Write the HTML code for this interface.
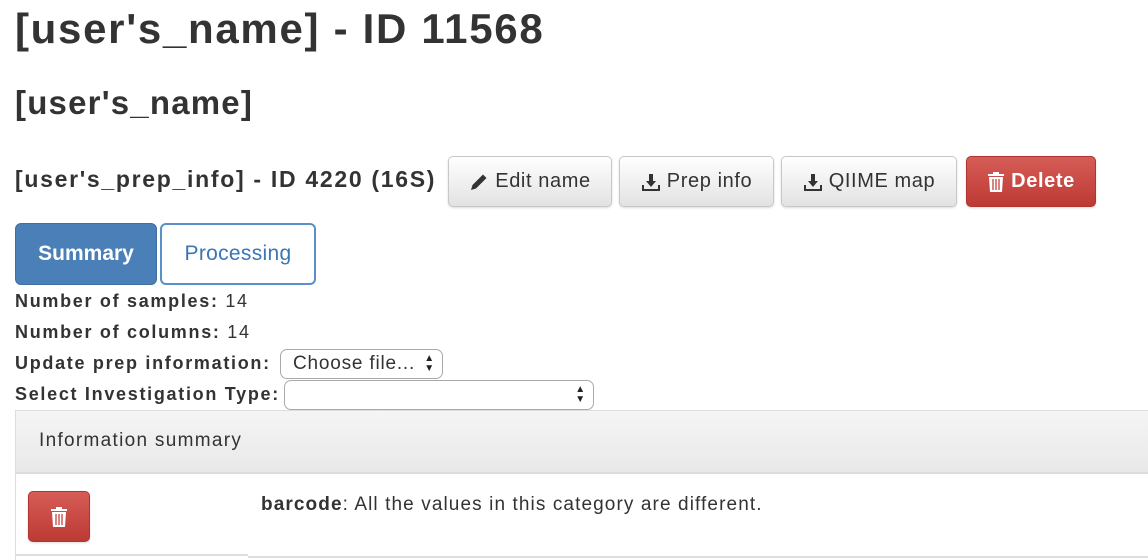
<!DOCTYPE html>
<html><head><style>
body{margin:0;width:1148px;height:560px;overflow:hidden;background:#fff;font-family:"Liberation Sans",sans-serif;color:#333;position:relative}
.a{position:absolute;white-space:nowrap}
.btn{position:absolute;box-sizing:border-box;border:1px solid #c8c8c8;border-radius:5px;background:linear-gradient(#fff,#e2e2e2);font-size:20px;letter-spacing:0.6px;display:flex;align-items:center;justify-content:center;gap:6px;color:#333;box-shadow:0 1px 2px rgba(0,0,0,.15)}
.red{background:linear-gradient(#d65c57,#bd3a34);border-color:#b03530;color:#fff}
b{font-weight:bold}
.t{font-size:18px;letter-spacing:1.7px}
.sel{position:absolute;box-sizing:border-box;border:1.5px solid #aaa;border-radius:7px;background:#fff;font-size:19px;letter-spacing:0.8px;padding-left:12px;display:flex;align-items:center}
.arr{position:absolute;right:7px;top:50%;transform:translateY(-50%);font-size:10px;line-height:10px;color:#222}
</style></head><body>
<div class="a" style="left:15px;top:5px;font-size:42px;font-weight:bold;letter-spacing:1.7px;">[user's_name] - ID 11568</div>
<div class="a" style="left:15px;top:84px;font-size:33px;font-weight:bold;letter-spacing:1.2px;">[user's_name]</div>
<div class="a" style="left:15px;top:166px;font-size:23px;font-weight:bold;letter-spacing:1.7px;">[user's_prep_info] - ID 4220 (16S)</div>
<div class="btn" style="left:448px;top:156px;width:164px;height:51px"><svg width="20" height="20" viewBox="0 0 20 20"><path d="M2 18l1.5-5L14 2.5l3.5 3.5L7 16.5z" fill="#333"/></svg>Edit name</div>
<div class="btn" style="left:619px;top:156px;width:155px;height:51px"><svg width="20" height="20" viewBox="0 0 20 20"><path d="M8 2h4v7h3l-5 6-5-6h3z M1 13h2v4h14v-4h2v6H1z" fill="#333"/></svg>Prep info</div>
<div class="btn" style="left:781px;top:156px;width:176px;height:51px"><svg width="20" height="20" viewBox="0 0 20 20"><path d="M8 2h4v7h3l-5 6-5-6h3z M1 13h2v4h14v-4h2v6H1z" fill="#333"/></svg>QIIME map</div>
<div class="btn red" style="left:966px;top:156px;width:130px;height:51px;font-weight:bold"><svg width="18" height="22" viewBox="0 0 18 22"><path d="M6 1h6v2h5v2H1V3h5z M2 6h14l-1 15H3z" fill="#fff"/><path d="M6 8v11M9 8v11M12 8v11" stroke="#c4433d" stroke-width="1.3"/></svg>Delete</div>
<div class="a" style="left:15px;top:223px;width:142px;height:62px;box-sizing:border-box;background:#4a7fb8;border:1px solid #3f6fa3;border-radius:6px;color:#fff;font-size:21px;font-weight:bold;display:flex;align-items:center;justify-content:center">Summary</div>
<div class="a" style="left:160px;top:223px;width:156px;height:62px;box-sizing:border-box;background:#fff;border:2px solid #5b8fc9;border-radius:6px;color:#3b76b5;font-size:21px;letter-spacing:0.3px;display:flex;align-items:center;justify-content:center">Processing</div>
<div class="a t" style="left:15px;top:291px;"><b>Number of samples:</b> 14</div>
<div class="a t" style="left:15px;top:322px;"><b>Number of columns:</b> 14</div>
<div class="a t" style="left:15px;top:353px;"><b>Update prep information:</b></div>
<div class="sel" style="left:280px;top:349px;width:163px;height:30px">Choose file...<span class="arr">▲<br>▼</span></div>
<div class="a t" style="left:15px;top:384px;"><b>Select Investigation Type:</b></div>
<div class="sel" style="left:284px;top:380px;width:310px;height:30px"><span class="arr">▲<br>▼</span></div>
<div class="a" style="left:15px;top:410px;width:1140px;height:64px;box-sizing:border-box;border:1px solid #ddd;border-bottom:2px solid #ddd;background:linear-gradient(#f5f5f5,#e8e8e8)"></div>
<div class="a" style="left:39px;top:430px;font-size:19px;letter-spacing:1.3px;">Information summary</div>
<div class="a" style="left:15px;top:474px;width:1px;height:86px;background:#ddd"></div>
<div class="a" style="left:15px;top:554px;width:233px;height:2px;background:#ddd"></div>
<div class="a" style="left:248px;top:556px;width:900px;height:2px;background:#ddd"></div>
<div class="btn red" style="left:28px;top:491px;width:62px;height:51px;border-radius:5px"><svg width="18" height="22" viewBox="0 0 18 22"><path d="M6 1h6v2h5v2H1V3h5z M2 6h14l-1 15H3z" fill="#fff"/><path d="M6 8v11M9 8v11M12 8v11" stroke="#c4433d" stroke-width="1.3"/></svg></div>
<div class="a" style="left:261px;top:494px;font-size:19px;letter-spacing:1.1px;"><b>barcode</b>: All the values in this category are different.</div>
</body></html>
